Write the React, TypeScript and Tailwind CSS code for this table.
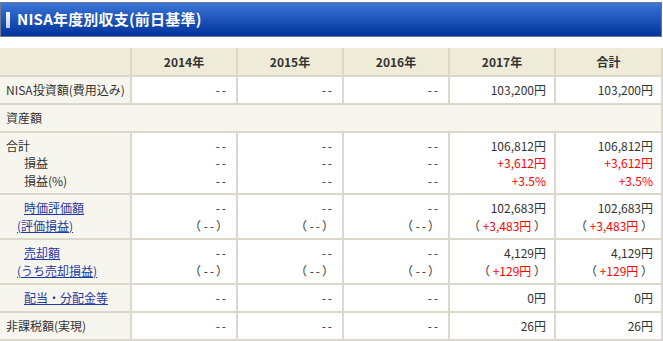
import React from "react";

const FONT = { fontFamily: '"Noto Sans CJK JP", "Noto Sans", sans-serif' };

const Red = ({ children }: { children: React.ReactNode }) => (
  <span className="text-[#ff0000]">{children}</span>
);

const cell = "border-2 border-[#dcd9cc] text-right pr-[8px] align-middle bg-white whitespace-nowrap";
const left = "border-2 border-l-0 border-[#dcd9cc] text-left align-middle bg-[#f7f6ee] pl-[6px] whitespace-nowrap";
const link = "text-[#1d3aa5] underline";

const Dash = () => <span className="tracking-[2px]">--</span>;
const PDash = () => (
  <span>
    （ <span className="tracking-[2px]">--</span>）
  </span>
);

const Lines = ({ lines }: { lines: React.ReactNode[] }) => (
  <div className="flex flex-col leading-[17.5px]">
    {lines.map((l, i) => (
      <div key={i}>{l}</div>
    ))}
  </div>
);

export default function App() {
  const three = [0, 1, 2];
  return (
    <div className="w-[663px] h-[341px] bg-white text-[#333] text-[12px] overflow-hidden" style={FONT}>
      <div className="mt-[2px] mr-[1px] h-[35px] border border-[#6f7b92] bg-gradient-to-b from-[#3c74d8] to-[#00339b] flex items-center">
        <div className="ml-[5px] w-[4px] h-[16px] bg-gradient-to-b from-white to-[#b9cdf2]" />
        <div className="ml-[7px] text-white text-[15px] font-bold tracking-[0.2px]">NISA年度別収支(前日基準)</div>
      </div>
      <table className="mt-[11px] w-[662px] border-collapse table-fixed">
        <colgroup>
          <col className="w-[131px]" />
          <col className="w-[106px]" />
          <col className="w-[106px]" />
          <col className="w-[106px]" />
          <col className="w-[106px]" />
          <col className="w-[107px]" />
        </colgroup>
        <tbody>
          <tr className="h-[28px]">
            <td className="border-2 border-l-0 border-t-0 border-[#dcd9cc] bg-[#eeebd8]" />
            {["2014年", "2015年", "2016年", "2017年", "合計"].map((h) => (
              <td key={h} className="border-2 border-t-0 border-[#dcd9cc] bg-[#eeebd8] text-center font-bold">
                {h}
              </td>
            ))}
          </tr>
          <tr className="h-[28px]">
            <td className={left}>NISA投資額(費用込み)</td>
            {three.map((i) => (
              <td key={i} className={cell}>
                <Dash />
              </td>
            ))}
            <td className={cell}>103,200円</td>
            <td className={cell}>103,200円</td>
          </tr>
          <tr className="h-[28px]">
            <td colSpan={6} className={left}>資産額</td>
          </tr>
          <tr className="h-[62px]">
            <td className={left}>
              <Lines lines={["合計", <span className="pl-[18px]">損益</span>, <span className="pl-[18px]">損益(%)</span>]} />
            </td>
            {three.map((i) => (
              <td key={i} className={cell}>
                <Lines lines={[<Dash />, <Dash />, <Dash />]} />
              </td>
            ))}
            {[0, 1].map((i) => (
              <td key={i} className={cell}>
                <Lines lines={["106,812円", <Red>+3,612円</Red>, <Red>+3.5%</Red>]} />
              </td>
            ))}
          </tr>
          <tr className="h-[45px]">
            <td className={left}>
              <Lines
                lines={[
                  <a className={`${link} ml-[18px]`}>時価評価額</a>,
                  <a className={`${link} ml-[11px]`}>(評価損益)</a>,
                ]}
              />
            </td>
            {three.map((i) => (
              <td key={i} className={cell}>
                <Lines lines={[<Dash />, <PDash />]} />
              </td>
            ))}
            {[0, 1].map((i) => (
              <td key={i} className={cell}>
                <Lines lines={["102,683円", <span>（ <Red>+3,483円</Red> ）</span>]} />
              </td>
            ))}
          </tr>
          <tr className="h-[45px]">
            <td className={left}>
              <Lines
                lines={[
                  <a className={`${link} ml-[18px]`}>売却額</a>,
                  <a className={`${link} ml-[11px]`}>(うち売却損益)</a>,
                ]}
              />
            </td>
            {three.map((i) => (
              <td key={i} className={cell}>
                <Lines lines={[<Dash />, <PDash />]} />
              </td>
            ))}
            {[0, 1].map((i) => (
              <td key={i} className={cell}>
                <Lines lines={["4,129円", <span>（ <Red>+129円</Red> ）</span>]} />
              </td>
            ))}
          </tr>
          <tr className="h-[28px]">
            <td className={left}>
              <a className={`${link} ml-[18px]`}>配当・分配金等</a>
            </td>
            {three.map((i) => (
              <td key={i} className={cell}>
                <Dash />
              </td>
            ))}
            <td className={cell}>0円</td>
            <td className={cell}>0円</td>
          </tr>
          <tr className="h-[28px]">
            <td className={left}>非課税額(実現)</td>
            {three.map((i) => (
              <td key={i} className={cell}>
                <Dash />
              </td>
            ))}
            <td className={cell}>26円</td>
            <td className={cell}>26円</td>
          </tr>
        </tbody>
      </table>
    </div>
  );
}
